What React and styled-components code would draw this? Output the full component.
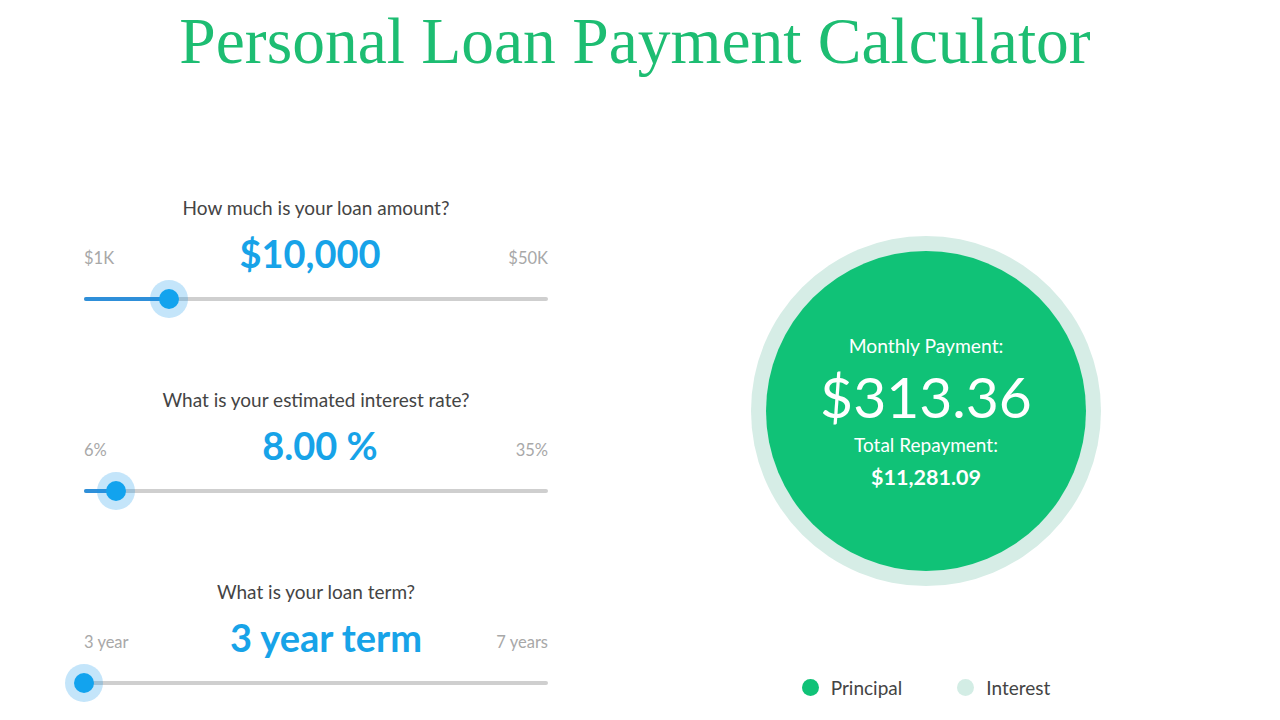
import React from "react";
import styled, { createGlobalStyle } from "styled-components";

const GlobalStyle = createGlobalStyle`
  html, body {
    margin: 0;
    padding: 0;
    background: #ffffff;
  }
  body {
    font-family: Lato, "Open Sans", sans-serif;
    color: #444;
  }
`;

const sliders = [
  {
    question: "How much is your loan amount?",
    value: "$10,000",
    min: "$1K",
    max: "$50K",
    pct: (10000 - 1000) / (50000 - 1000),
    shift: -6,
  },
  {
    question: "What is your estimated interest rate?",
    value: "8.00 %",
    min: "6%",
    max: "35%",
    pct: (8 - 6) / (35 - 6),
    shift: 4,
  },
  {
    question: "What is your loan term?",
    value: "3 year term",
    min: "3 year",
    max: "7 years",
    pct: 0,
    shift: 10,
  },
];

function Slider({ question, value, min, max, pct, shift }) {
  return (
    <SliderBlock>
      <Question>{question}</Question>
      <ValueRow>
        <RangeLabel>{min}</RangeLabel>
        <Value $shift={shift}>{value}</Value>
        <RangeLabel $end>{max}</RangeLabel>
      </ValueRow>
      <Track>
        <Fill style={{ width: `${pct * 100}%` }} />
        <Thumb style={{ left: `${pct * 100}%` }} />
      </Track>
    </SliderBlock>
  );
}

function App() {
  return (
    <>
      <GlobalStyle />
      <Page>
        <Title>Personal Loan Payment Calculator</Title>
        <Main>
          <SliderColumn>
            {sliders.map((s) => (
              <Slider key={s.question} {...s} />
            ))}
          </SliderColumn>
          <ResultColumn>
            <Ring>
              <Disc>
                <DiscLabel>Monthly Payment:</DiscLabel>
                <Monthly>$313.36</Monthly>
                <DiscLabel $second>Total Repayment:</DiscLabel>
                <Total>$11,281.09</Total>
              </Disc>
            </Ring>
            <Legend>
              <LegendItem>
                <Dot $color="#10c277" />
                Principal
              </LegendItem>
              <LegendItem>
                <Dot $color="#d3ede5" />
                Interest
              </LegendItem>
            </Legend>
          </ResultColumn>
        </Main>
      </Page>
    </>
  );
}

export default App;

const Page = styled.div`
  width: 1280px;
  height: 720px;
  overflow: hidden;
`;

const Title = styled.h1`
  margin: 0;
  padding-top: 6px;
  height: 74px;
  text-align: center;
  font-family: "Liberation Serif", "Times New Roman", serif;
  font-weight: 400;
  font-size: 65.5px;
  line-height: 70px;
  color: #1dbd72;
  padding-right: 10px;
`;

const Main = styled.div`
  display: grid;
  grid-template-columns: 464px 708px;
  column-gap: 24px;
  padding-left: 84px;
  padding-top: 117px;
`;

const SliderColumn = styled.div`
  display: flex;
  flex-direction: column;
  gap: 70px;
`;

const SliderBlock = styled.div`
  display: flex;
  flex-direction: column;
`;

const Question = styled.div`
  text-align: center;
  font-size: 19px;
  line-height: 22px;
  color: #444;
`;

const ValueRow = styled.div`
  margin-top: 12px;
  display: flex;
  align-items: center;
  justify-content: space-between;
  height: 44px;
`;

const RangeLabel = styled.span`
  font-size: 16.5px;
  line-height: 20px;
  padding-top: 10px;
  color: #a8a8a8;
  min-width: 60px;
  text-align: ${(p) => (p.$end ? "right" : "left")};
`;

const Value = styled.span`
  font-size: 38px;
  font-weight: 700;
  line-height: 44px;
  color: #17a3e8;
  transform: translateX(${(p) => p.$shift}px);
`;

const Track = styled.div`
  position: relative;
  margin-top: 4px;
  height: 40px;
  &::before {
    content: "";
    position: absolute;
    left: 0;
    right: 0;
    top: 18px;
    height: 4px;
    border-radius: 2px;
    background: #cfcfcf;
  }
`;

const Fill = styled.div`
  position: absolute;
  left: 0;
  top: 18px;
  height: 4px;
  border-radius: 2px;
  background: #2e8fd9;
`;

const Thumb = styled.div`
  position: absolute;
  top: 20px;
  width: 20px;
  height: 20px;
  margin: -10px 0 0 -10px;
  border-radius: 50%;
  background: #12a3ee;
  box-shadow: 0 0 0 9px rgba(18, 150, 235, 0.25);
`;

const ResultColumn = styled.div`
  display: flex;
  flex-direction: column;
  align-items: center;
  padding-top: 39px;
`;

const Ring = styled.div`
  width: 350px;
  height: 350px;
  border-radius: 50%;
  background: #d6ede6;
  display: flex;
  align-items: center;
  justify-content: center;
`;

const Disc = styled.div`
  width: 320px;
  height: 320px;
  border-radius: 50%;
  background: #10c277;
  color: #ffffff;
  display: flex;
  flex-direction: column;
  align-items: center;
  justify-content: center;
`;

const DiscLabel = styled.div`
  font-size: ${(p) => (p.$second ? "19px" : "19.3px")};
  line-height: 22px;
  margin-top: ${(p) => (p.$second ? "6px" : "0")};
`;

const Monthly = styled.div`
  margin-top: 7px;
  font-size: 57px;
  line-height: 64px;
`;

const Total = styled.div`
  margin-top: 10px;
  font-size: 21.5px;
  font-weight: 700;
  line-height: 22px;
`;

const Legend = styled.div`
  margin-top: 89px;
  display: flex;
  gap: 55px;
  height: 24px;
  align-items: center;
`;

const LegendItem = styled.div`
  display: flex;
  align-items: center;
  gap: 12px;
  font-size: 19px;
  color: #444;
`;

const Dot = styled.span`
  width: 17px;
  height: 17px;
  border-radius: 50%;
  background: ${(p) => p.$color};
`;
